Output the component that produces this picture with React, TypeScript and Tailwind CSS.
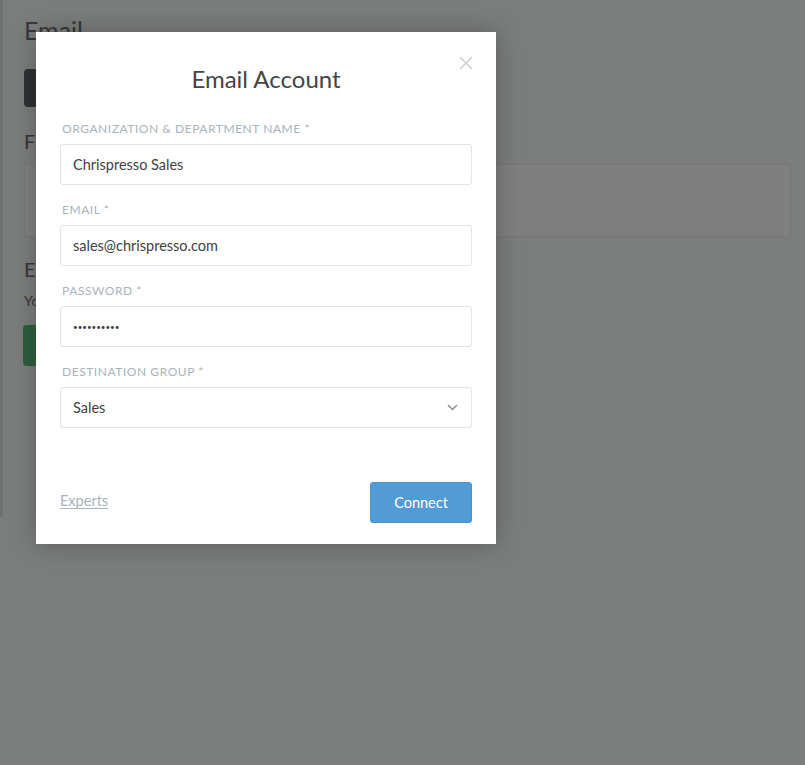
import React from "react";

const font = { fontFamily: '"Lato", "Open Sans", sans-serif' };

function Field({ label, children }: { label: string; children: React.ReactNode }) {
  return (
    <div className="flex flex-col mb-4">
      <label className="h-4 leading-4 mt-[1px] -mb-[1px] text-[12px] tracking-[0.55px] uppercase text-[#a8b3bc] pl-[2px]">
        {label}
      </label>
      <div className="mt-2 h-[41px] rounded-[3px] border border-[#e1e3e5] bg-white flex items-center pl-3 pr-[13px] text-[14.5px] text-[#3f4042]">
        {children}
      </div>
    </div>
  );
}

export default function App() {
  return (
    <div className="relative w-[805px] h-[765px] overflow-hidden bg-[#f6f8f8]" style={font}>
      {/* background page */}
      <div className="flex h-full">
        <div className="w-[3px] h-[517px] bg-[#dfe1e1]" />
        <div className="flex-1 pl-[21px] pr-[14px] pt-[14px] flex flex-col">
          <h1 className="text-[25px] leading-[32px] text-[#6e7071]">Email</h1>
          <div className="mt-[23px] w-[120px] h-[38px] rounded-[4px] bg-[#5f6066]" />
          <h2 className="mt-[22px] text-[20px] leading-[24px] text-[#6e7071]">Fi</h2>
          <div className="mt-[11px] h-[73px] bg-white border border-[#eceeee]" />
          <h2 className="mt-[20px] text-[20px] leading-[24px] text-[#6e7071]">Em</h2>
          <p className="mt-[10px] text-[14px] leading-[20px] text-[#6e7071]">You</p>
          <div className="mt-[14px] -ml-[1px] w-[140px] h-[41px] rounded-[4px] bg-[#5cbc78]" />
        </div>
      </div>

      {/* overlay */}
      <div className="absolute inset-0 bg-[#000000]/50" />

      {/* modal */}
      <div className="absolute left-[36px] top-[32px] w-[460px] h-[512px] bg-white shadow-[0_0_24px_rgba(0,0,0,0.25)] px-6 pt-[30px] flex flex-col">
        <button className="absolute right-[23px] top-[24px] w-[14px] h-[14px]">
          <svg width="14" height="14" viewBox="0 0 14 14" fill="none" stroke="#cfcfcf" strokeWidth="1.6">
            <path d="M1 1 L13 13 M13 1 L1 13" />
          </svg>
        </button>
        <h2 className="text-center text-[24px] leading-[34px] text-[#444546]">Email Account</h2>
        <div className="mt-6 flex flex-col">
          <Field label="Organization & Department Name *">Chrispresso Sales</Field>
          <Field label="Email *">sales@chrispresso.com</Field>
          <Field label="Password *">
            <span className="text-[8px] tracking-[0px] text-[#3f4042]">••••••••••</span>
          </Field>
          <Field label="Destination Group *">
            <span className="flex-1">Sales</span>
            <svg width="11" height="7" viewBox="0 0 11 7" fill="none" stroke="#8d8d8d" strokeWidth="1.5">
              <path d="M1 1 L5.5 5.5 L10 1" />
            </svg>
          </Field>
        </div>
        <div className="mt-[38px] flex items-center justify-between">
          <a className="-mt-[3px] text-[14.5px] text-[#a8b3bc] underline underline-offset-2">Experts</a>
          <button className="w-[102px] h-[41px] rounded-[3px] bg-[#519bd7] border border-[#4a90c9] text-white text-[14.5px]">
            Connect
          </button>
        </div>
      </div>
    </div>
  );
}
